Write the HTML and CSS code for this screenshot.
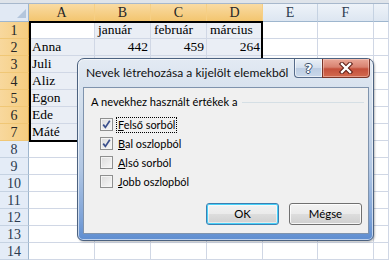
FILE: index.html
```html
<!DOCTYPE html>
<html lang="hu">
<head>
<meta charset="utf-8">
<title>Excel – Nevek létrehozása</title>
<link rel="stylesheet" href="styles.css">
</head>
<body>
<div class="app">
  <div class="topstrip"></div>
  <div class="sheet">
    <div class="hd corner"><span class="tri"></span></div>
    <div class="hd col sel">A</div>
    <div class="hd col sel">B</div>
    <div class="hd col sel">C</div>
    <div class="hd col sel">D</div>
    <div class="hd col">E</div>
    <div class="hd col">F</div>
    <div class="hd col"></div>

    <div class="hd row sel">1</div>
    <div class="c"></div><div class="c s">január</div><div class="c s">február</div><div class="c s">március</div><div class="c"></div><div class="c"></div><div class="c"></div>

    <div class="hd row sel">2</div>
    <div class="c s">Anna</div><div class="c s n">442</div><div class="c s n">459</div><div class="c s n">264</div><div class="c"></div><div class="c"></div><div class="c"></div>

    <div class="hd row sel">3</div>
    <div class="c s">Juli</div><div class="c s"></div><div class="c s"></div><div class="c s"></div><div class="c"></div><div class="c"></div><div class="c"></div>

    <div class="hd row sel">4</div>
    <div class="c s">Aliz</div><div class="c s"></div><div class="c s"></div><div class="c s"></div><div class="c"></div><div class="c"></div><div class="c"></div>

    <div class="hd row sel">5</div>
    <div class="c s">Egon</div><div class="c s"></div><div class="c s"></div><div class="c s"></div><div class="c"></div><div class="c"></div><div class="c"></div>

    <div class="hd row sel">6</div>
    <div class="c s">Ede</div><div class="c s"></div><div class="c s"></div><div class="c s"></div><div class="c"></div><div class="c"></div><div class="c"></div>

    <div class="hd row sel">7</div>
    <div class="c s">Máté</div><div class="c s"></div><div class="c s"></div><div class="c s"></div><div class="c"></div><div class="c"></div><div class="c"></div>

    <div class="hd row">8</div>
    <div class="c"></div><div class="c"></div><div class="c"></div><div class="c"></div><div class="c"></div><div class="c"></div><div class="c"></div>
    <div class="hd row">9</div>
    <div class="c"></div><div class="c"></div><div class="c"></div><div class="c"></div><div class="c"></div><div class="c"></div><div class="c"></div>
    <div class="hd row">10</div>
    <div class="c"></div><div class="c"></div><div class="c"></div><div class="c"></div><div class="c"></div><div class="c"></div><div class="c"></div>
    <div class="hd row">11</div>
    <div class="c"></div><div class="c"></div><div class="c"></div><div class="c"></div><div class="c"></div><div class="c"></div><div class="c"></div>
    <div class="hd row">12</div>
    <div class="c"></div><div class="c"></div><div class="c"></div><div class="c"></div><div class="c"></div><div class="c"></div><div class="c"></div>
    <div class="hd row">13</div>
    <div class="c"></div><div class="c"></div><div class="c"></div><div class="c"></div><div class="c"></div><div class="c"></div><div class="c"></div>
    <div class="hd row">14</div>
    <div class="c"></div><div class="c"></div><div class="c"></div><div class="c"></div><div class="c"></div><div class="c"></div><div class="c"></div>
  </div>

  <div class="selection"></div>

  <div class="dialog">
    <div class="titlebar">
      <div class="title">Nevek létrehozása a kijelölt elemekből</div>
      <div class="capbtns">
        <div class="capbtn help"><span>?</span></div>
        <div class="capbtn close">
          <svg width="16" height="12" viewBox="0 0 16 12">
            <path d="M4 2 L12 10 M12 2 L4 10" stroke="#5a1c14" stroke-width="4.4" stroke-linecap="square" fill="none"/>
            <path d="M4 2 L12 10 M12 2 L4 10" stroke="#ffffff" stroke-width="2.4" stroke-linecap="square" fill="none"/>
          </svg>
        </div>
      </div>
    </div>
    <div class="client">
      <div class="group">
        <span class="glabel">A nevekhez használt értékek a</span>
        <span class="gline"></span>
      </div>
      <div class="checks">
        <div class="chk">
          <span class="box on"><svg width="11" height="11" viewBox="0 0 11 11"><path d="M2.2 5.6 L4.4 8.4 L8.8 1.8" stroke="#3a4f8c" stroke-width="1.7" fill="none"/></svg></span>
          <span class="lbl focus"><u>F</u>első sorból</span>
        </div>
        <div class="chk">
          <span class="box on"><svg width="11" height="11" viewBox="0 0 11 11"><path d="M2.2 5.6 L4.4 8.4 L8.8 1.8" stroke="#3a4f8c" stroke-width="1.7" fill="none"/></svg></span>
          <span class="lbl"><u>B</u>al oszlopból</span>
        </div>
        <div class="chk">
          <span class="box"></span>
          <span class="lbl"><u>A</u>lsó sorból</span>
        </div>
        <div class="chk">
          <span class="box"></span>
          <span class="lbl"><u>J</u>obb oszlopból</span>
        </div>
      </div>
      <div class="buttons">
        <div class="btn default">OK</div>
        <div class="btn">Mégse</div>
      </div>
    </div>
  </div>
</div>
</body>
</html>
```
FILE: styles.css
```css
html, body {
  margin: 0;
  padding: 0;
  background: #ffffff;
}
.app {
  position: relative;
  width: 389px;
  height: 261px;
  overflow: hidden;
  background: #ffffff;
}
.topstrip {
  height: 3px;
  background: #dfe4ea;
  border-bottom: 1px solid #a7b8cc;
}
.sheet {
  display: grid;
  grid-template-columns: 29px 66px 56px 56px 56px 55px 56px 15px;
  grid-template-rows: 18px repeat(14, 17px);
  font-family: "Liberation Serif", "Times New Roman", serif;
  font-size: 13.5px;
  color: #000;
}
.c {
  box-sizing: border-box;
  border-right: 1px solid #d0d7e5;
  border-bottom: 1px solid #d0d7e5;
  display: flex;
  align-items: flex-end;
  padding: 0 2px 0 3px;
  line-height: 16px;
  white-space: nowrap;
  overflow: hidden;
}
.c.s { background: #eaeef5; }
.c.n { justify-content: flex-end; }
.hd {
  box-sizing: border-box;
  display: flex;
  align-items: center;
  justify-content: center;
  font-family: "Liberation Serif", "Times New Roman", serif;
  font-size: 14px;
  color: #2b3a4e;
}
.hd.col {
  background: linear-gradient(#eef3f9, #dde6f1);
  border-right: 1px solid #c5d2e2;
  border-bottom: 1px solid #9eb6ce;
}
.hd.col.sel {
  background: linear-gradient(#f9dba3, #f3c56f);
  border-right: 1px solid #f6cf85;
  border-bottom: 1px solid #dba64b;
  color: #262626;
}
.hd.row {
  background: #e4ecf7;
  border-right: 1px solid #9eb6ce;
  border-bottom: 1px solid #c5d2e2;
  padding-top: 1px;
}
.hd.row.sel {
  background: linear-gradient(90deg, #f8d89d, #f5cd80);
  border-right: 1px solid #dba64b;
  border-bottom: 1px solid #f0c776;
  color: #262626;
}
.corner {
  position: relative;
  background: #e1e9f4;
  border-right: 1px solid #9eb6ce;
  border-bottom: 1px solid #9eb6ce;
}
.tri {
  position: absolute;
  right: 2px;
  bottom: 3px;
  width: 0;
  height: 0;
  border-left: 9px solid transparent;
  border-bottom: 9px solid #b4c6dc;
}
.selection {
  position: absolute;
  left: 29px;
  top: 21px;
  width: 234px;
  height: 121px;
  box-sizing: border-box;
  border: 2px solid #000;
  pointer-events: none;
}

/* Dialog */
.dialog {
  position: absolute;
  left: 77px;
  top: 58px;
  width: 297px;
  height: 183px;
  box-sizing: border-box;
  border: 1px solid #4c6280;
  border-radius: 7px 7px 6px 6px;
  background: linear-gradient(#e3eaf3 0%, #d2deec 25%, #b3c8e4 60%, #7ea3d8 88%, #5e8dd0 100%);
  box-shadow: inset 0 0 0 1px rgba(255,255,255,0.6), 1px 1px 2px rgba(0,0,0,0.25);
  display: flex;
  flex-direction: column;
  font-family: "Lato", "Noto Sans", sans-serif;
  font-size: 11px;
  color: #000;
}
.titlebar {
  height: 28px;
  display: flex;
  justify-content: space-between;
  align-items: flex-start;
}
.title {
  padding: 6px 0 0 8px;
  font-size: 12.1px;
  line-height: 16px;
  color: #101010;
  white-space: nowrap;
}
.capbtns {
  display: flex;
  margin-right: 3px;
}
.capbtn {
  box-sizing: border-box;
  height: 19px;
  display: flex;
  align-items: center;
  justify-content: center;
  border: 1px solid #566b8a;
  border-top: none;
}
.help {
  width: 28px;
  border-radius: 0 0 0 4px;
  background: linear-gradient(#eaf0f7 0%, #d3dfee 48%, #bccde3 52%, #c9d8ea 100%);
  border-right: none;
  box-shadow: inset 0 0 0 1px rgba(255,255,255,0.6);
}
.help span {
  font-family: "DejaVu Sans", sans-serif;
  font-weight: bold;
  font-size: 13px;
  line-height: 13px;
  color: #ffffff;
  text-shadow: 1px 0 0 #3b4f6c, -1px 0 0 #3b4f6c, 0 1px 0 #3b4f6c, 0 -1px 0 #3b4f6c;
}
.close {
  width: 48px;
  border-radius: 0 0 4px 0;
  background: linear-gradient(#eaa898 0%, #d88270 45%, #c4503b 55%, #d26a4f 100%);
  border-color: #7a3528;
  box-shadow: inset 0 0 0 1px rgba(255,220,210,0.45);
}
.client {
  flex: 1;
  margin: 0 4px 6px 5px;
  background: #f0f0f0;
  border: 1px solid #7f93ad;
  display: flex;
  flex-direction: column;
}
.group {
  display: flex;
  align-items: center;
  padding: 6px 4px 0 7px;
  height: 16px;
}
.glabel {
  white-space: nowrap;
  line-height: 16px;
  font-size: 11.1px;
}
.gline {
  flex: 1;
  margin-left: 5px;
  border-top: 1px solid #d5dfe5;
}
.checks {
  display: flex;
  flex-direction: column;
  margin-top: 5px;
  padding-left: 16px;
}
.chk {
  height: 19px;
  display: flex;
  align-items: center;
}
.box {
  box-sizing: border-box;
  width: 13px;
  height: 13px;
  border: 1px solid #8e8f8f;
  background: linear-gradient(135deg, #dcdcdc, #f7f7f7);
  box-shadow: inset 0 0 0 1px #f4f4f4;
  display: flex;
  align-items: center;
  justify-content: center;
}
.lbl {
  margin-left: 3px;
  line-height: 14px;
  padding: 0 1px;
  border: 1px solid transparent;
  white-space: nowrap;
  font-size: 10.9px;
}
.lbl.focus {
  border: 1px dotted #000;
}
.lbl u {
  text-decoration: underline;
  text-underline-offset: 1px;
}
.buttons {
  margin-top: auto;
  display: flex;
  justify-content: flex-end;
  gap: 10px;
  padding: 0 6px 8px 0;
}
.btn {
  box-sizing: border-box;
  width: 73px;
  height: 22px;
  border: 1px solid #707070;
  border-radius: 3px;
  background: linear-gradient(#f2f2f2 0%, #ebebeb 48%, #dddddd 52%, #cfcfcf 100%);
  box-shadow: inset 0 0 0 1px rgba(255,255,255,0.8);
  display: flex;
  align-items: center;
  justify-content: center;
  line-height: 14px;
  font-size: 11.4px;
}
.btn.default {
  border-color: #3c7fb1;
  box-shadow: inset 0 0 0 1px #48d1f9, inset 0 0 0 2px rgba(255,255,255,0.5);
}
```
